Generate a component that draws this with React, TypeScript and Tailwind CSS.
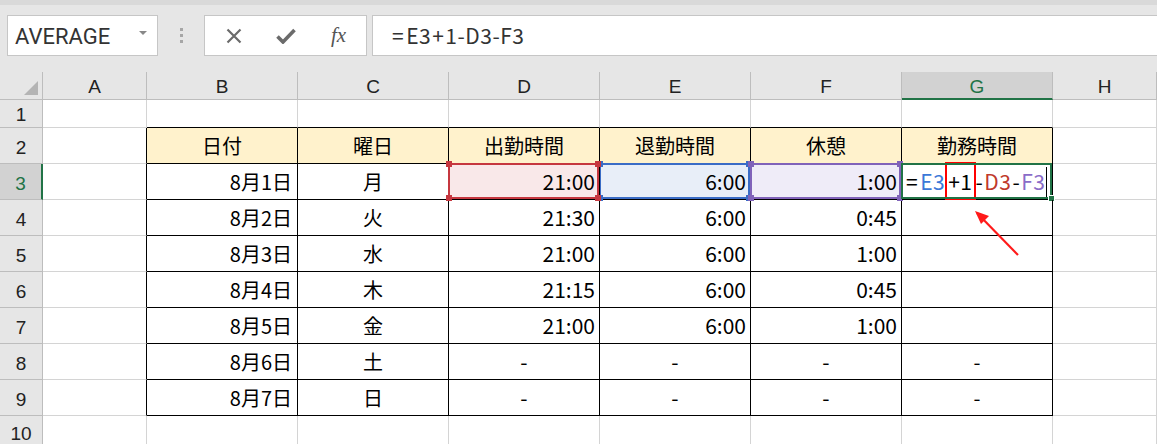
import React from 'react'

// Excel-like sheet: shift table with a formula being edited in G3

const cols = ['A', 'B', 'C', 'D', 'E', 'F', 'G', 'H']

const rows: string[][] = [
  ['8月1日', '月', '21:00', '6:00', '1:00'],
  ['8月2日', '火', '21:30', '6:00', '0:45'],
  ['8月3日', '水', '21:00', '6:00', '1:00'],
  ['8月4日', '木', '21:15', '6:00', '0:45'],
  ['8月5日', '金', '21:00', '6:00', '1:00'],
  ['8月6日', '土', '-', '-', '-'],
  ['8月7日', '日', '-', '-', '-'],
]

const headers = ['日付', '曜日', '出勤時間', '退勤時間', '休憩', '勤務時間']

const jp = "font-['Noto_Sans_CJK_JP','Liberation_Sans',sans-serif]"

// border colours for a cell at sheet row r (1-based), column index c (0 = A)
function cellBorder(r: number, c: number) {
  const inTable = r >= 2 && r <= 9 && c >= 1 && c <= 6
  if (inTable) return 'border-r border-b border-black'
  if (c === 0 && r >= 2 && r <= 9) return 'border-r border-b border-r-black border-b-[#d4d4d4]'
  if (r === 1 && c >= 1 && c <= 6) return 'border-r border-b border-r-[#d4d4d4] border-b-black'
  return 'border-r border-b border-[#d4d4d4]'
}

function Corners({ color }: { color: string }) {
  return (
    <>
      <span className={`absolute -left-[4px] -top-[4px] w-[6px] h-[6px] ${color}`} />
      <span className={`absolute -right-[4px] -top-[4px] w-[6px] h-[6px] ${color}`} />
      <span className={`absolute -left-[4px] -bottom-[4px] w-[6px] h-[6px] ${color}`} />
      <span className={`absolute -right-[4px] -bottom-[4px] w-[6px] h-[6px] ${color}`} />
    </>
  )
}

function Toolbar() {
  return (
    <div className="h-[72px] bg-[#e6e6e6] border-t-[5px] border-[#d9d9d9] flex items-start pt-[10px] pl-[7px]">
      <div className="w-[151px] h-[41px] bg-white border border-[#c6c6c6] flex items-center pl-[7px] pr-[10px] justify-between">
        <span className="font-['Roboto',sans-serif] text-[22px] text-[#333] leading-none pt-[2px]">AVERAGE</span>
        <svg width="8" height="5" viewBox="0 0 8 5" className="mt-[-4px]">
          <path d="M0 0h8L4 4z" fill="#888" />
        </svg>
      </div>
      <div className="w-[46px] h-[41px] flex flex-col items-center justify-center gap-[3px]">
        <span className="w-[3px] h-[3px] bg-[#a6a6a6]" />
        <span className="w-[3px] h-[3px] bg-[#a6a6a6]" />
        <span className="w-[3px] h-[3px] bg-[#a6a6a6]" />
      </div>
      <div className="w-[163px] h-[41px] bg-white border border-[#c6c6c6] flex items-center">
        <div className="w-[56px] flex justify-center pl-[1px]">
          <svg width="16" height="16" viewBox="0 0 16 16">
            <path d="M1.5 1.5l13 13M14.5 1.5l-13 13" stroke="#6b6b6b" strokeWidth="2.2" />
          </svg>
        </div>
        <div className="w-[50px] flex justify-center">
          <svg width="20" height="16" viewBox="0 0 20 16">
            <path d="M1.5 8.5l5.5 5.5L18.5 2" stroke="#6b6b6b" strokeWidth="3.6" fill="none" />
          </svg>
        </div>
        <div className="w-[55px] flex justify-center">
          <span className="font-['Liberation_Serif',serif] italic text-[21px] text-[#555] leading-none">fx</span>
        </div>
      </div>
      <div className="flex-1 ml-[5px] h-[41px] bg-white border border-r-0 border-[#c6c6c6] flex items-center pl-[19px]">
        <span className={`${jp} text-[21px] text-[#333] leading-none tracking-[0.5px]`}>
          <span className="mr-[2px]">=</span>E3<span className="mx-[1px]">+</span>1-D3-F3
        </span>
      </div>
    </div>
  )
}

function FormulaCell() {
  return (
    <div className="h-full flex items-center pl-[4px] bg-white">
      <span className={`${jp} text-[21px] leading-none text-black whitespace-nowrap tracking-[0.5px] flex items-center`}>
        <span className="mr-[2px]">=</span>
        <span className="text-[#3b78d8]">E3</span>
        <span className="relative ml-[3px] mr-[3px]">
          +1
          <span className="absolute -left-[3px] -right-[3px] -top-[9px] -bottom-[8px] border-2 border-[#ff0000]" />
        </span>
        -<span className="text-[#c0392b] ml-[1px]">D3</span>
        <span className="ml-[1px]">-</span>
        <span className="text-[#8a6cc8] ml-[1px]">F3</span>
      </span>
      <span className="w-[1px] h-[30px] bg-black ml-[1px]" />
    </div>
  )
}

export default function App() {
  const sheetRows = Array.from({ length: 10 }, (_, i) => i + 1)

  const cellContent = (r: number, c: number) => {
    if (r === 2 && c >= 1 && c <= 6) {
      return (
        <div className={`h-full bg-[#fff2cc] flex items-center justify-center ${jp} text-[20px] leading-none`}>
          {headers[c - 1]}
        </div>
      )
    }
    if (r >= 3 && r <= 9) {
      const d = rows[r - 3]
      if (c === 1) {
        return <div className={`h-full flex items-center justify-end pr-[5px] ${jp} text-[20px] leading-none`}>{d[0]}</div>
      }
      if (c === 2) {
        return <div className={`h-full flex items-center justify-center ${jp} text-[20px] leading-none`}>{d[1]}</div>
      }
      if (c >= 3 && c <= 5) {
        const v = d[c - 1]
        const fill =
          r === 3 && c === 3 ? 'bg-[#f9e8e9]' : r === 3 && c === 4 ? 'bg-[#e8eef8]' : r === 3 && c === 5 ? 'bg-[#efecf8]' : 'bg-white'
        return (
          <div
            className={`h-full flex items-center ${v === '-' ? 'justify-center' : 'justify-end pr-[4px]'} ${fill} ${jp} text-[21px] leading-none`}
          >
            {v}
          </div>
        )
      }
      if (c === 6 && r === 3) return <FormulaCell />
      if (c === 6 && r >= 8) {
        return <div className={`h-full flex items-center justify-center ${jp} text-[20px] leading-none`}>-</div>
      }
    }
    return null
  }

  return (
    <div className="w-[1157px] h-[444px] overflow-hidden bg-white text-black">
      <Toolbar />
      <div className="grid grid-cols-[43px_104px_151px_151px_151px_151px_151px_151px_1fr] grid-rows-[28px_28px_repeat(9,36px)]">
        {/* corner */}
        <div className="relative bg-[#e6e6e6] border-r border-b border-[#bdbdbd]">
          <svg width="14" height="14" viewBox="0 0 14 14" className="absolute right-[4px] bottom-[4px]">
            <path d="M14 0v14H0z" fill="#b4b4b4" />
          </svg>
        </div>
        {cols.map((l) => (
          <div
            key={l}
            className={
              l === 'G'
                ? "bg-[#d2d2d2] border-r border-[#bdbdbd] border-b-2 border-b-[#217346] flex items-center justify-center font-['Liberation_Sans',sans-serif] text-[19px] text-[#217346] leading-none pt-[2px]"
                : "bg-[#e6e6e6] border-r border-b border-[#bdbdbd] flex items-center justify-center font-['Liberation_Sans',sans-serif] text-[19px] text-[#222] leading-none pt-[2px]"
            }
          >
            {l}
          </div>
        ))}

        {sheetRows.map((r) => (
          <React.Fragment key={r}>
            <div
              className={
                r === 3
                  ? "bg-[#d2d2d2] border-b border-[#bdbdbd] border-r-2 border-r-[#217346] flex items-center justify-center font-['Liberation_Sans',sans-serif] text-[19px] text-[#217346] leading-none pt-[4px]"
                  : r === 1
                    ? "bg-[#e6e6e6] border-r border-b border-[#bdbdbd] flex items-center justify-center font-['Liberation_Sans',sans-serif] text-[19px] text-[#222] leading-none pt-[2px]"
                    : r === 10
                      ? "bg-[#e6e6e6] border-r border-[#bdbdbd] flex items-start justify-center font-['Liberation_Sans',sans-serif] text-[19px] text-[#222] leading-none pt-[8px]"
                      : "bg-[#e6e6e6] border-r border-b border-[#bdbdbd] flex items-center justify-center font-['Liberation_Sans',sans-serif] text-[19px] text-[#222] leading-none pt-[4px]"
              }
            >
              {r}
            </div>
            {cols.map((_, c) => (
              <div
                key={c}
                className={`relative ${cellBorder(r, c)} ${r === 3 && c === 4 ? 'z-10' : ''} ${r === 3 && (c === 3 || c === 5 || c === 6) ? 'z-20' : ''} ${r === 4 && c === 6 ? 'z-30' : ''}`}
              >
                {cellContent(r, c)}
                {r === 3 && c === 3 && (
                  <span className="absolute -left-[1px] -top-[1px] right-0 bottom-0 border-2 border-[#c6373f] pointer-events-none">
                    <Corners color="bg-[#c6373f]" />
                  </span>
                )}
                {r === 3 && c === 4 && (
                  <span className="absolute -left-[1px] -top-[1px] right-0 bottom-0 border-2 border-[#3a6cc6] pointer-events-none">
                    <Corners color="bg-[#3a6cc6]" />
                  </span>
                )}
                {r === 3 && c === 5 && (
                  <span className="absolute -left-[1px] -top-[1px] right-0 bottom-0 border-2 border-[#8062b9] pointer-events-none">
                    <Corners color="bg-[#8062b9]" />
                  </span>
                )}
                {r === 3 && c === 6 && (
                  <span className="absolute -left-[1px] -top-[1px] right-0 bottom-0 border-2 border-[#217346] pointer-events-none">
                    <span className="absolute -right-[5px] -bottom-[5px] w-[7px] h-[7px] bg-[#217346] border border-white" />
                  </span>
                )}
                {r === 4 && c === 6 && (
                  <svg width="60" height="60" viewBox="0 0 60 60" className="absolute left-[66px] top-[6px] overflow-visible">
                    <path d="M50 49L9 7" stroke="#ff1a1a" strokeWidth="2.2" />
                    <path d="M7 5l14 5-8 8z" fill="#ff1a1a" />
                  </svg>
                )}
              </div>
            ))}
          </React.Fragment>
        ))}
      </div>
    </div>
  )
}
